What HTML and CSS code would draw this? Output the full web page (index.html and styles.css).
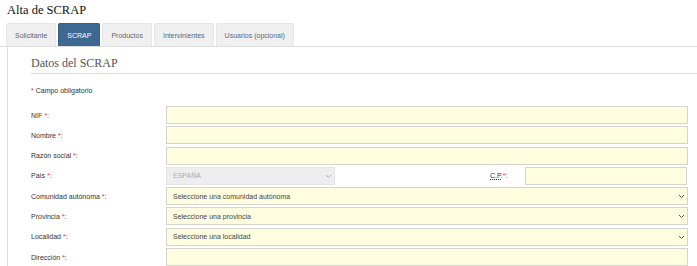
FILE: index.html
```html
<!DOCTYPE html>
<html lang="es">
<head>
    <meta charset="UTF-8">
    <meta name="viewport" content="width=device-width, initial-scale=1.0">
    <title>Alta de SCRAP</title>
    <link rel="stylesheet" href="styles.css">
</head>
<body>

    <h1 class="page-title">Alta de SCRAP</h1>

    <ul class="tabs">
        <li class="tab">Solicitante</li>
        <li class="tab active">SCRAP</li>
        <li class="tab">Productos</li>
        <li class="tab">Intervinientes</li>
        <li class="tab">Usuarios (opcional)</li>
    </ul>

    <div class="tab-panel">
        <h2 class="section-title">Datos del SCRAP</h2>
        <p class="required-note"><span class="req">*</span> Campo obligatorio</p>

        <form class="scrap-form">
            <div class="row">
                <span class="label">NIF <span class="req">*</span>:</span>
                <input type="text" class="field">
            </div>
            <div class="row">
                <span class="label">Nombre <span class="req">*</span>:</span>
                <input type="text" class="field">
            </div>
            <div class="row">
                <span class="label">Razón social <span class="req">*</span>:</span>
                <input type="text" class="field">
            </div>
            <div class="row">
                <span class="label">País <span class="req">*</span>:</span>
                <div class="select-wrap country">
                    <select class="field disabled" disabled>
                        <option>ESPAÑA</option>
                    </select>
                    <svg class="chevron" width="7" height="5" viewBox="0 0 7 5"><path d="M1 1l2.5 2.5L6 1" fill="none" stroke="#aaa" stroke-width="1"/></svg>
                </div>
                <span class="label cp-label"><abbr title="Código postal">C.P.</abbr><span class="req">*</span>:</span>
                <input type="text" class="field cp">
            </div>
            <div class="row">
                <span class="label">Comunidad autónoma <span class="req">*</span>:</span>
                <div class="select-wrap">
                    <select class="field">
                        <option>Seleccione una comunidad autónoma</option>
                    </select>
                    <svg class="chevron" width="7" height="5" viewBox="0 0 7 5"><path d="M1 1l2.5 2.5L6 1" fill="none" stroke="#555" stroke-width="1"/></svg>
                </div>
            </div>
            <div class="row">
                <span class="label">Provincia <span class="req">*</span>:</span>
                <div class="select-wrap">
                    <select class="field">
                        <option>Seleccione una provincia</option>
                    </select>
                    <svg class="chevron" width="7" height="5" viewBox="0 0 7 5"><path d="M1 1l2.5 2.5L6 1" fill="none" stroke="#555" stroke-width="1"/></svg>
                </div>
            </div>
            <div class="row">
                <span class="label">Localidad <span class="req">*</span>:</span>
                <div class="select-wrap">
                    <select class="field">
                        <option>Seleccione una localidad</option>
                    </select>
                    <svg class="chevron" width="7" height="5" viewBox="0 0 7 5"><path d="M1 1l2.5 2.5L6 1" fill="none" stroke="#555" stroke-width="1"/></svg>
                </div>
            </div>
            <div class="row">
                <span class="label">Dirección <span class="req">*</span>:</span>
                <input type="text" class="field">
            </div>
        </form>
    </div>

</body>
</html>
```

FILE: styles.css
```css
body {
    margin: 0;
    font-family: "Liberation Sans", Arial, sans-serif;
    background: #fff;
    color: #333;
    overflow: hidden;
}

.page-title {
    margin: 0;
    padding: 3px 0 0 7px;
    height: 20px;
    font-family: "Liberation Serif", "Times New Roman", serif;
    font-size: 12.5px;
    font-weight: normal;
    line-height: 15px;
    color: #111;
}

.tabs {
    list-style: none;
    display: flex;
    gap: 2px;
    margin: 0;
    padding: 0 0 0 6px;
    border-bottom: 1px solid #ddd;
}

.tab {
    height: 22px;
    padding: 0 8px;
    display: flex;
    align-items: center;
    font-size: 7px;
    color: #5d6677;
    background: #f0f0f0;
    border: 1px solid #e6e6e6;
    border-bottom: none;
    border-radius: 2px 2px 0 0;
}

.tab.active {
    background: #3c6891;
    border-color: #35608a;
    color: #fff;
}

.tab-panel {
    margin-left: 7px;
    border-left: 1px solid #ddd;
    padding: 8px 0 0 23px;
}

.section-title {
    margin: 0;
    height: 18px;
    font-family: "Liberation Serif", "Times New Roman", serif;
    font-size: 12px;
    font-weight: normal;
    line-height: 16px;
    color: #555;
    border-bottom: 1px solid #ddd;
}

.required-note {
    margin: 12px 0 0;
    font-size: 7px;
    line-height: 10px;
    color: #333;
}

.req {
    color: #e0303a;
}

.scrap-form {
    margin-top: 10px;
    padding-right: 9px;
    display: flex;
    flex-direction: column;
    gap: 2.3px;
}

.row {
    display: flex;
    align-items: center;
    height: 18px;
}

.label {
    width: 135px;
    flex-shrink: 0;
    font-size: 7px;
    color: #333;
}

.field {
    flex: 1;
    min-width: 0;
    height: 18px;
    box-sizing: border-box;
    margin: 0;
    padding: 0 6px;
    border: 1px solid #d5d5cc;
    border-radius: 0;
    background: #fffddf;
    font-family: "Liberation Sans", Arial, sans-serif;
    font-size: 7px;
    color: #444;
    appearance: none;
    outline: none;
}

.select-wrap {
    flex: 1;
    display: flex;
    position: relative;
    height: 18px;
}

.select-wrap .field {
    width: 100%;
}

.select-wrap.country {
    flex: none;
    width: 169px;
}

.chevron {
    position: absolute;
    right: 3px;
    top: 7px;
}

.field.disabled {
    background: #eeeeee;
    border-color: #e4e4e4;
    color: #aaa;
    opacity: 1;
}

.cp-label {
    width: auto;
    margin-left: 155px;
    margin-right: 18px;
}

.cp-label abbr {
    text-decoration: underline dotted;
}

.field.cp {
    flex: none;
    width: 162px;
}
```
